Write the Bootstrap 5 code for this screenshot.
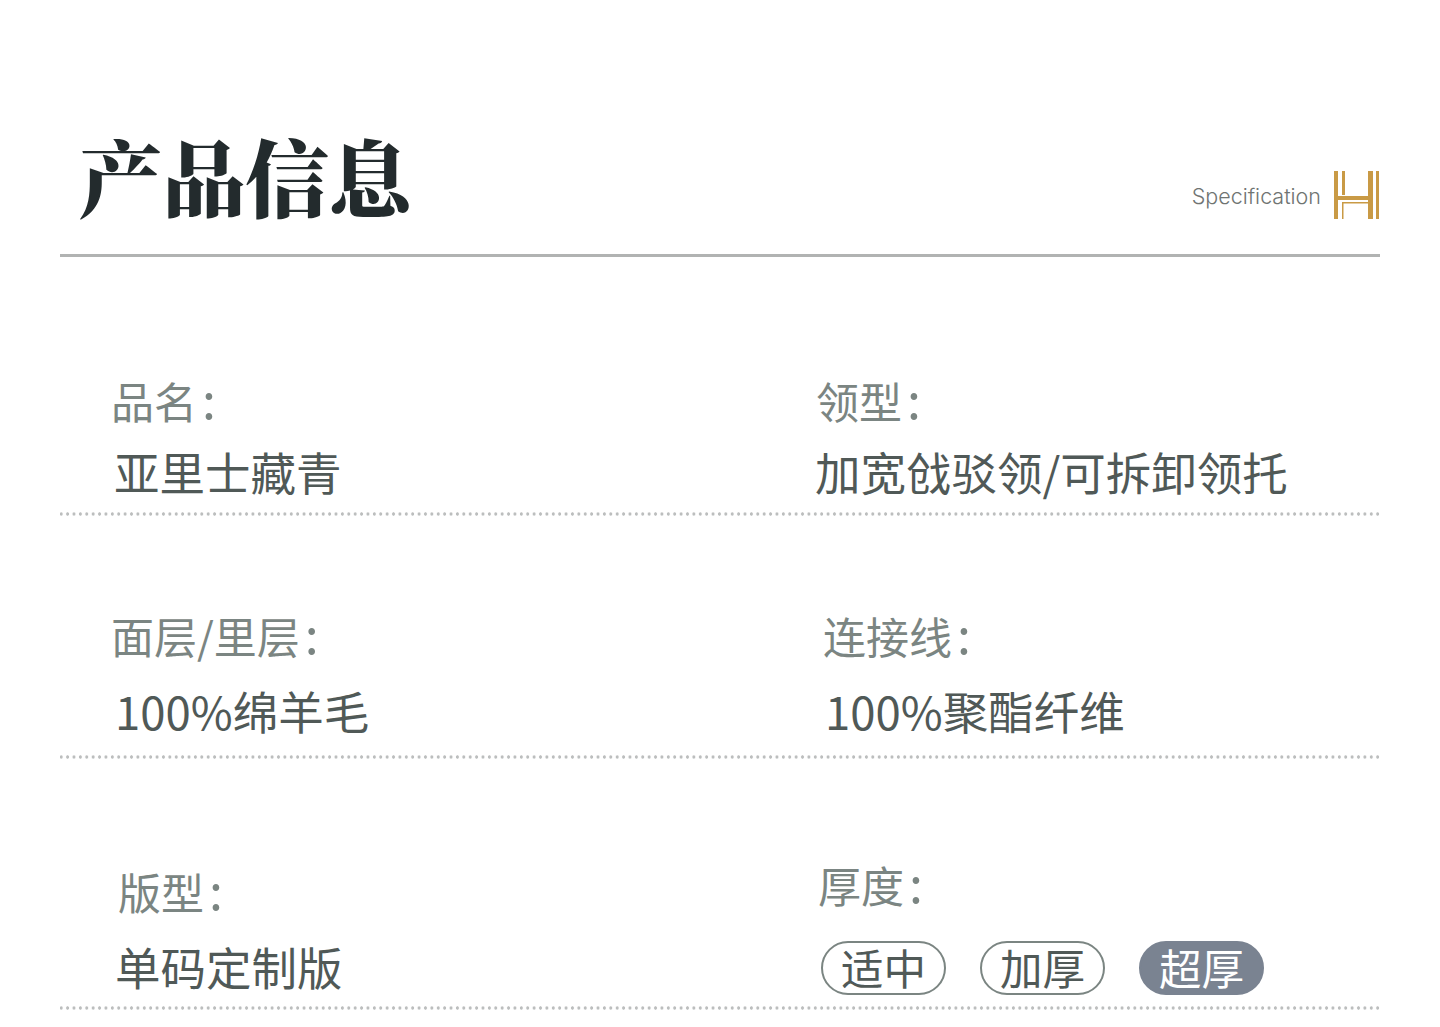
<!DOCTYPE html>
<html lang="zh">
<head>
<meta charset="utf-8">
<link href="https://cdn.jsdelivr.net/npm/bootstrap@5.3.0/dist/css/bootstrap.min.css" rel="stylesheet">
<style>
html,body{background:#fff;margin:0}
body{font-family:"Noto Sans CJK SC","Noto Sans",sans-serif;width:1440px;height:1027px;overflow:hidden}
.sheet{padding:0 60px}
.head-band{height:257px;border-bottom:3px solid #b1b3b2;padding-bottom:37px}
.big-title{font-family:"Noto Serif CJK SC","Noto Sans CJK SC",serif;font-size:84px;line-height:1;font-weight:900;color:#232b2d;margin:0 0 0 19px;letter-spacing:-1px}
.spec-side{margin-bottom:-3px}
.spec-word{font-family:"Inter",sans-serif;font-size:21.5px;font-weight:300;color:#6f7472;line-height:1;margin-bottom:13px}
.spec-mark{display:block;margin-left:12px}
.info-row{background:radial-gradient(circle,#bcbebe 1.4px,transparent 1.9px) -2px bottom/6.4px 4px repeat-x}
.r1{height:259px;padding-bottom:22px}
.r2{height:243px;padding-bottom:26px}
.r3{height:251px;padding-bottom:14px}
.lift7{padding-bottom:7px}
.lift1{padding-bottom:1px}
.lab{font-size:43px;line-height:1;color:#7b8582;font-weight:400}
.cln{font-size:50px;line-height:0;margin-left:5px}
.val{font-size:45.5px;line-height:1;color:#505957;font-weight:400}
.c1{width:756px;flex:none}
.x51{padding-left:51px}.x58{padding-left:58px}
.x7{padding-left:7px}.x2{padding-left:2px}
.v3{padding-left:3px}.v4{padding-left:4px}.v2{padding-left:2px}
.vn1{margin-left:-1px}.vn3{margin-left:-3px}
.g1{margin-top:27px}.g2{margin-top:31px}.g3{margin-top:31px}.g4{margin-top:35px}
.pill-row{gap:34px;margin-left:3px}
.pill-tag{width:125px;height:54px;border:2px solid #7b8582;border-radius:27px;font-size:42.5px;line-height:1;color:#505957;padding-bottom:2px}
.pill-on{background:#7a8391;border-color:#7a8391;color:#fff}
</style>
</head>
<body>
<div class="sheet">
  <div class="head-band d-flex justify-content-between align-items-end">
    <h1 class="big-title">产品信息</h1>
    <div class="spec-side d-flex align-items-end">
      <span class="spec-word">Specification</span>
      <svg class="spec-mark" width="47" height="50" viewBox="0 0 47 50"><g fill="#c99a45"><rect x="1" y="1" width="4" height="48"/><rect x="9" y="1" width="3" height="24"/><rect x="9" y="32" width="1.5" height="17"/><rect x="35" y="1" width="5" height="48"/><rect x="43" y="1" width="3" height="48"/><rect x="5" y="26" width="30" height="4"/><rect x="9" y="32" width="26" height="1.5"/></g></svg>
    </div>
  </div>

  <div class="info-row r1 d-flex align-items-end">
    <div class="c1 x51"><div class="lab">品名<span class="cln">:</span></div><div class="val g1 v3">亚里士藏青</div></div>
    <div class="flex-grow-1"><div class="lab">领型<span class="cln">:</span></div><div class="val g1 vn1">加宽戗驳领/可拆卸领托</div></div>
  </div>
  <div class="info-row r2 d-flex align-items-end">
    <div class="c1 x51"><div class="lab">面层/里层<span class="cln">:</span></div><div class="val g2 v4">100%绵羊毛</div></div>
    <div class="flex-grow-1 x7"><div class="lab">连接线<span class="cln">:</span></div><div class="val g2 v2">100%聚酯纤维</div></div>
  </div>
  <div class="info-row r3 d-flex align-items-end">
    <div class="c1 x58 lift7"><div class="lab">版型<span class="cln">:</span></div><div class="val g3 vn3">单码定制版</div></div>
    <div class="flex-grow-1 x2 lift1"><div class="lab">厚度<span class="cln">:</span></div>
      <div class="pill-row d-flex g4">
        <span class="pill-tag d-flex align-items-center justify-content-center">适中</span>
        <span class="pill-tag d-flex align-items-center justify-content-center">加厚</span>
        <span class="pill-tag pill-on d-flex align-items-center justify-content-center">超厚</span>
      </div>
    </div>
  </div>
</div>
<script src="https://cdn.jsdelivr.net/npm/bootstrap@5.3.0/dist/js/bootstrap.bundle.min.js"></script>
</body>
</html>
